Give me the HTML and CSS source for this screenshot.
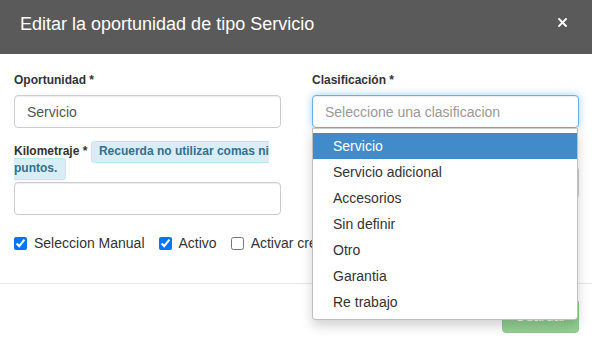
FILE: index.html
```html
<!DOCTYPE html>
<html lang="es">
<head>
<meta charset="utf-8">
<title>Editar la oportunidad de tipo Servicio</title>
<link rel="stylesheet" href="styles.css">
</head>
<body>
<div class="modal">
  <div class="modal-header">
    <h4 class="modal-title">Editar la oportunidad de tipo Servicio</h4>
    <button class="close" type="button" aria-label="Cerrar">
      <svg width="9" height="9" viewBox="0 0 9 9"><path d="M1 1 L8 8 M8 1 L1 8" stroke="#fff" stroke-width="1.9" stroke-linecap="square"/></svg>
    </button>
  </div>
  <div class="modal-body">
    <div class="grid">
      <div class="form-group">
        <label class="control-label">Oportunidad *</label>
        <input class="form-control" type="text" value="Servicio">
      </div>
      <div class="form-group">
        <label class="control-label">Clasificación *</label>
        <div class="select-wrap">
          <input class="form-control is-focused" type="text" placeholder="Seleccione una clasificacion">
          <ul class="dropdown">
            <li class="option active">Servicio</li>
            <li class="option">Servicio adicional</li>
            <li class="option">Accesorios</li>
            <li class="option">Sin definir</li>
            <li class="option">Otro</li>
            <li class="option">Garantia</li>
            <li class="option">Re trabajo</li>
          </ul>
        </div>
      </div>
      <div class="form-group">
        <label class="control-label label-km">Kilometraje * <span class="hint">Recuerda no utilizar comas ni puntos.</span></label>
        <input class="form-control" type="text">
      </div>
      <div class="form-group">
        <label class="control-label">Asesor *</label>
        <input class="form-control" type="text">
      </div>
    </div>
    <div class="checks">
      <label class="check"><input type="checkbox" checked><span>Seleccion Manual</span></label>
      <label class="check"><input type="checkbox" checked><span>Activo</span></label>
      <label class="check"><input type="checkbox"><span>Activar crédito</span></label>
    </div>
  </div>
  <div class="modal-footer">
    <button class="btn-save" type="button">Guardar</button>
  </div>
</div>
</body>
</html>
```

FILE: styles.css
```css
* { box-sizing: border-box; }
html, body { margin: 0; padding: 0; background: #fff; }
body {
  font-family: "Liberation Sans", Arial, Helvetica, sans-serif;
  font-size: 14px;
  color: #333;
  width: 592px;
  height: 346px;
  overflow: hidden;
}
.modal { width: 592px; }
.modal-header {
  height: 54px;
  background: #5a5a5a;
  padding: 11px 20px 0 20px;
  display: flex;
  justify-content: space-between;
  align-items: flex-start;
}
.modal-title {
  margin: 0;
  font-size: 18px;
  font-weight: 400;
  line-height: 26px;
  color: #fff;
}
.close {
  margin: 7px 5px 0 0;
  padding: 0;
  border: 0;
  background: transparent;
  width: 9px;
  height: 9px;
  display: block;
}
.close svg { display: block; }
.modal-body {
  padding: 18px 13px 30px 14px;
}
.grid {
  display: grid;
  grid-template-columns: 267px 267px;
  column-gap: 31px;
  row-gap: 15px;
}
.control-label {
  display: block;
  font-size: 12px;
  font-weight: 700;
  line-height: 17px;
  margin-bottom: 6px;
  color: #333;
}
.label-km { margin-bottom: 5px; }
.hint {
  background: #d9edf7;
  border: 1px solid #bce8f1;
  color: #31708f;
  border-radius: 4px;
  padding: 2.4px 7.2px 3.6px;
  font-weight: 700;
}
.form-control {
  display: block;
  width: 100%;
  height: 33px;
  padding: 6px 12px;
  font-family: inherit;
  font-size: 14px;
  color: #555;
  background: #fff;
  border: 1px solid #ccc;
  border-radius: 4px;
  box-shadow: inset 0 1px 1px rgba(0,0,0,.075);
  outline: none;
}
.form-control::placeholder { color: #999; }
.is-focused {
  border-color: #66afe9;
  box-shadow: inset 0 1px 1px rgba(0,0,0,.075), 0 0 8px rgba(102,175,233,.6);
}
.select-wrap { position: relative; }
.dropdown {
  position: absolute;
  z-index: 10;
  top: 100%;
  left: 0;
  right: 1px;
  margin: 0;
  padding: 4px 0;
  list-style: none;
  background: #fff;
  border: 1px solid rgba(0,0,0,.25);
  border-top-color: rgba(0,0,0,.2);
  border-radius: 0 0 4px 4px;
  box-shadow: 0 6px 12px rgba(0,0,0,.175);
}
.option {
  height: 26px;
  line-height: 26px;
  padding: 0 20px;
  font-size: 14px;
  color: #333;
  white-space: nowrap;
}
.option.active {
  background: #428bca;
  color: #fff;
}
.checks {
  margin-top: 18px;
  display: flex;
  gap: 14px;
  height: 20px;
  align-items: center;
}
.check {
  display: inline-flex;
  align-items: center;
  gap: 7px;
  font-size: 14px;
  line-height: 20px;
  color: #333;
  white-space: nowrap;
}
.check input {
  margin: 0;
  width: 13px;
  height: 13px;
}
.modal-footer {
  border-top: 1px solid #e5e5e5;
  padding: 15px 13px 15px 14px;
  display: flex;
  justify-content: flex-end;
}
.btn-save {
  height: 34px;
  padding: 6px 12px;
  font-family: inherit;
  font-size: 14px;
  color: #fff;
  background: #5cb85c;
  border: 1px solid #4cae4c;
  border-radius: 4px;
  opacity: .65;
}
```
